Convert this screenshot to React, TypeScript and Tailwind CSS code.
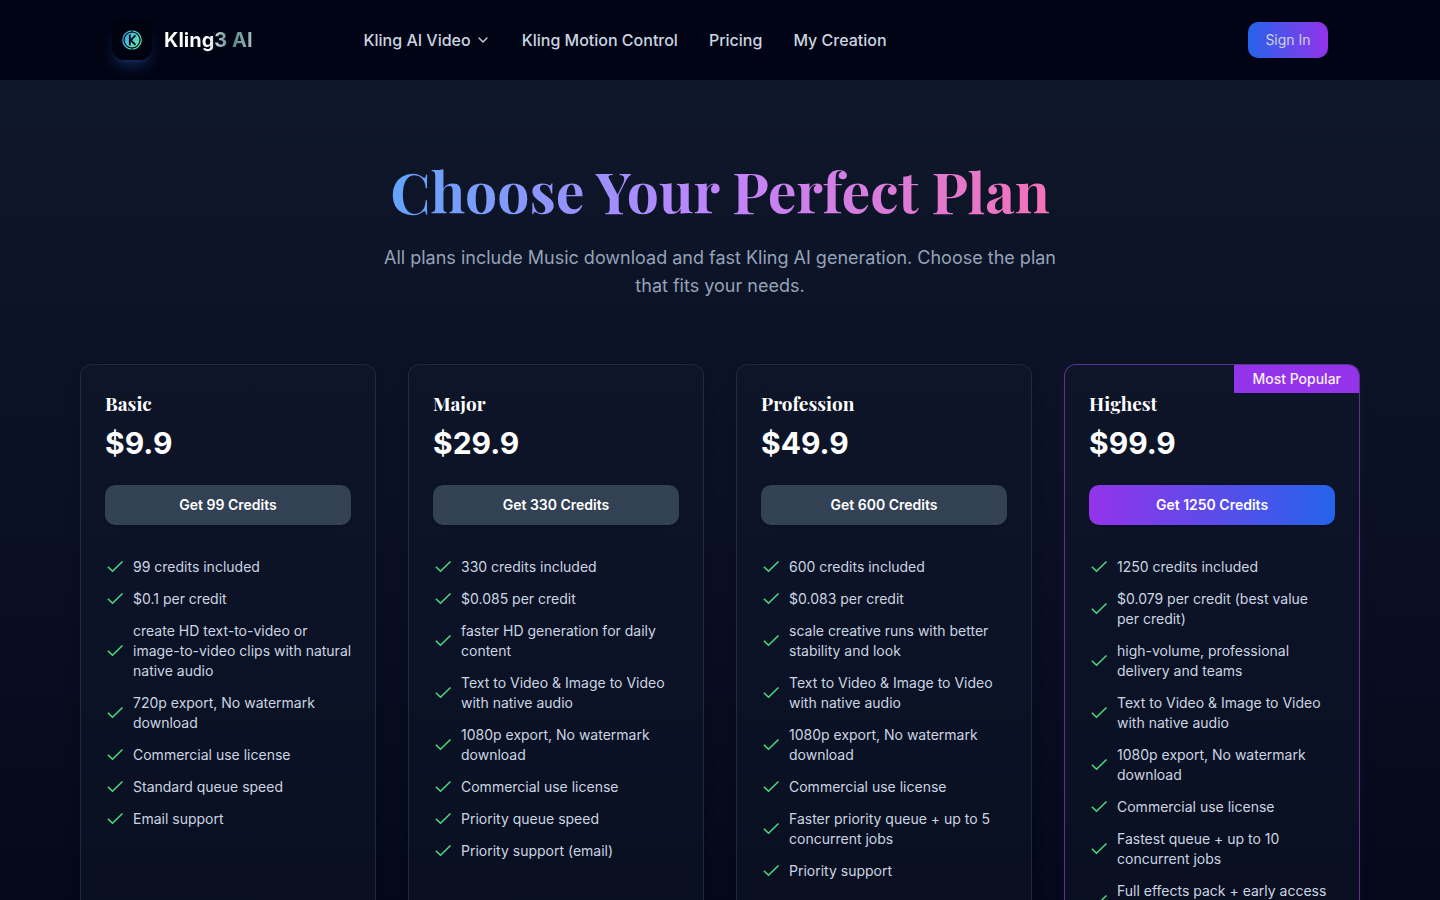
import { ChevronDown } from "lucide-react";

type Plan = {
  name: string;
  price: string;
  credits: number;
  features: string[];
  popular?: boolean;
};

const plans: Plan[] = [
  {
    name: "Basic",
    price: "$9.9",
    credits: 99,
    features: [
      "99 credits included",
      "$0.1 per credit",
      "create HD text-to-video or image-to-video clips with natural native audio",
      "720p export, No watermark download",
      "Commercial use license",
      "Standard queue speed",
      "Email support",
    ],
  },
  {
    name: "Major",
    price: "$29.9",
    credits: 330,
    features: [
      "330 credits included",
      "$0.085 per credit",
      "faster HD generation for daily content",
      "Text to Video & Image to Video with native audio",
      "1080p export, No watermark download",
      "Commercial use license",
      "Priority queue speed",
      "Priority support (email)",
    ],
  },
  {
    name: "Profession",
    price: "$49.9",
    credits: 600,
    features: [
      "600 credits included",
      "$0.083 per credit",
      "scale creative runs with better stability and look",
      "Text to Video & Image to Video with native audio",
      "1080p export, No watermark download",
      "Commercial use license",
      "Faster priority queue + up to 5 concurrent jobs",
      "Priority support",
    ],
  },
  {
    name: "Highest",
    price: "$99.9",
    credits: 1250,
    popular: true,
    features: [
      "1250 credits included",
      "$0.079 per credit (best value\nper credit)",
      "high-volume, professional delivery and teams",
      "Text to Video & Image to Video with native audio",
      "1080p export, No watermark download",
      "Commercial use license",
      "Fastest queue + up to 10 concurrent jobs",
      "Full effects pack + early access\nto new features",
    ],
  },
];

function Logo() {
  return (
    <svg viewBox="0 0 20 20" className="size-5" fill="none" aria-hidden="true">
      <defs>
        <linearGradient id="logo-fill" x1="0" y1="0" x2="1" y2="0.6">
          <stop offset="0" stopColor="#3b9bdc" />
          <stop offset="0.5" stopColor="#4fc8d8" />
          <stop offset="1" stopColor="#5be0a4" />
        </linearGradient>
      </defs>
      <circle cx="10" cy="10" r="9.2" stroke="url(#logo-fill)" strokeWidth="1.2" />
      <circle cx="10" cy="10" r="7.4" fill="url(#logo-fill)" />
      <path d="M7.8 4.4v11M13.4 5.4 8.8 10.2l4.6 4.6" stroke="#02061a" strokeWidth="1.8" />
      <path d="M10 0v2.6M10 17.4V20" stroke="#02061a" strokeWidth="1" />
    </svg>
  );
}

function Check() {
  return (
    <svg viewBox="0 0 20 20" className="size-5 shrink-0 text-[#4ade80]" fill="none" aria-hidden="true">
      <path d="M2.9 9.7 7.5 14.3 17.5 4.5" stroke="currentColor" strokeWidth="1.5" />
    </svg>
  );
}

function Header() {
  return (
    <header className="bg-[#010414]">
      <div className="mx-auto flex h-20 max-w-7xl items-center px-8">
        <a href="#" className="flex items-center gap-3">
          <span className="flex size-10 items-center justify-center rounded-xl bg-[#01020f] shadow-lg shadow-[#3b82f6]/25">
            <Logo />
          </span>
          <span className="bg-linear-to-r/srgb from-white from-50% via-[#4d8080] via-75% to-[#a5c4c0] bg-clip-text text-xl font-bold text-transparent">
            Kling3 AI
          </span>
        </a>
        <nav className="ml-[111px] flex flex-1 items-center gap-[31px] font-medium text-[#cbd5e1]">
          <button type="button" className="flex items-center gap-1">
            Kling AI Video
            <ChevronDown className="size-4" />
          </button>
          <a href="#">Kling Motion Control</a>
          <a href="#">Pricing</a>
          <a href="#">My Creation</a>
        </nav>
        <button
          type="button"
          className="h-9 min-w-20 rounded-[10px] bg-linear-to-r/srgb from-[#2563eb] to-[#9333ea] px-4 text-sm text-[#cbd5e1]"
        >
          Sign In
        </button>
      </div>
    </header>
  );
}

function PlanCard({ plan }: { plan: Plan }) {
  return (
    <article
      className={`relative overflow-hidden rounded-xl border bg-[#0f172a]/50 p-6 ${
        plan.popular
          ? "border-[#a855f7]/50 shadow-lg shadow-[#a855f7]/10"
          : "border-[#334155]/50 shadow-lg shadow-black/20"
      }`}
    >
      {plan.popular && (
        <span className="absolute top-0 right-0 bg-[#9333ea] px-[18px] py-1 text-sm font-medium text-[#f8f0ff]">
          Most Popular
        </span>
      )}
      <h2 className="font-['Playfair_Display','Liberation_Serif',serif] text-[19px] leading-7 font-bold text-white">
        {plan.name}
      </h2>
      <p className="mt-2 text-3xl font-bold text-white">{plan.price}</p>
      <button
        type="button"
        className={`mt-6 h-10 w-full rounded-[10px] text-sm font-semibold text-white shadow-sm ${
          plan.popular ? "bg-linear-to-r/srgb from-[#9333ea] to-[#2563eb]" : "bg-[#334155]"
        }`}
      >
        Get {plan.credits} Credits
      </button>
      <ul className="mt-8 space-y-3 text-sm text-[#cbd5e1]">
        {plan.features.map((feature) => (
          <li key={feature} className="-mr-1 flex items-center gap-2">
            <Check />
            <span className="whitespace-pre-line">{feature}</span>
          </li>
        ))}
      </ul>
    </article>
  );
}

export default function App() {
  return (
    <div className="min-h-screen bg-[#020617] font-['Inter',sans-serif]">
      <Header />
      <main className="bg-linear-to-b/srgb from-[#0f172a] via-[#0a0f24] via-50% to-[#020617] px-8 pt-20 pb-16">
        <div className="mx-auto max-w-7xl">
          <div className="mx-auto max-w-2xl text-center">
            <h1 className="bg-linear-to-r/srgb from-[#60a5fa] via-[#c084fc] to-[#f472b6] bg-clip-text font-['Playfair_Display','Liberation_Serif',serif] text-[57px] leading-[60px] font-bold text-transparent">
              Choose Your Perfect Plan
            </h1>
            <p className="mt-6 text-lg text-[#94a3b8]">
              All plans include Music download and fast Kling AI generation. Choose the plan that fits your needs.
            </p>
          </div>
          <div className="mt-16 grid grid-cols-4 gap-8">
            {plans.map((plan) => (
              <PlanCard key={plan.name} plan={plan} />
            ))}
          </div>
        </div>
      </main>
    </div>
  );
}
